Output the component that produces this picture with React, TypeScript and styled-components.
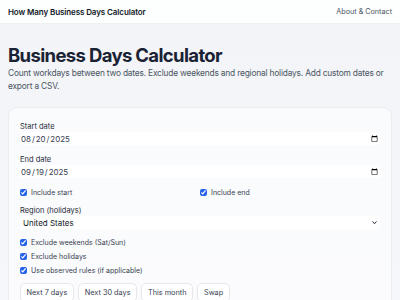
import React, { useState } from 'react';
import styled, { createGlobalStyle } from 'styled-components';

const GlobalStyle = createGlobalStyle`
  html, body {
    margin: 0;
    padding: 0;
  }
  body {
    font-family: Inter, "Noto Sans", sans-serif;
    background: linear-gradient(180deg, #f2f4f7 0%, #f5f7fa 100%);
    color: #111827;
    min-height: 100vh;
  }
  * {
    box-sizing: border-box;
  }
`;

const Header = styled.header`
  height: 24px;
  display: flex;
  align-items: center;
  justify-content: space-between;
  padding: 0 8px;
  background: rgba(255, 255, 255, 0.85);
  border-bottom: 1px solid #eef0f3;
`;

const Brand = styled.div`
  font-size: 8px;
  font-weight: 600;
  color: #111827;
  letter-spacing: -0.1px;
`;

const NavLink = styled.a`
  font-size: 7.2px;
  color: #4b5563;
  text-decoration: none;
`;

const Main = styled.main`
  padding: 20px 8px 0;
`;

const Title = styled.h1`
  margin: 0;
  font-size: 18.5px;
  line-height: 22px;
  font-weight: 700;
  color: #1a2233;
  letter-spacing: -0.65px;
`;

const Lead = styled.p`
  margin: 1px 0 0;
  font-size: 8.4px;
  line-height: 13px;
  color: #4b5563;
  letter-spacing: -0.2px;
`;

const Card = styled.section`
  margin-top: 14px;
  padding: 12px 11px;
  border: 1px solid #e9ecf0;
  border-radius: 9px;
  background: rgba(255, 255, 255, 0.55);
`;

const Field = styled.div<{ $gapAfter: number }>`
  display: flex;
  flex-direction: column;
  margin-bottom: ${(p) => p.$gapAfter}px;
`;

const Label = styled.label`
  padding-top: 2px;
  font-size: 7.5px;
  line-height: 10px;
  color: #1f2937;
`;

const DateInput = styled.input`
  height: 13px;
  border: none;
  background: #ffffff;
  font-family: inherit;
  font-size: 7.9px;
  color: #374151;
  padding: 0 2px 0 0;
  outline: none;
  &::-webkit-calendar-picker-indicator {
    width: 7px;
    height: 7px;
    padding: 0;
    margin: 0;
  }
`;

const SelectWrap = styled.div`
  position: relative;
  display: flex;
`;

const Select = styled.select`
  flex: 1;
  appearance: none;
  height: 13px;
  border: none;
  border-radius: 0;
  background: #ffffff;
  font-family: inherit;
  font-size: 8px;
  color: #111827;
  padding: 0 0 0 3px;
  outline: none;
`;

const Chevron = styled.svg`
  position: absolute;
  right: 3px;
  top: 4.5px;
  width: 5px;
  height: 4px;
  pointer-events: none;
`;

const Row = styled.div`
  display: grid;
  grid-template-columns: 1fr 1fr;
  margin-bottom: 6.5px;
`;

const Check = styled.label<{ $line?: number }>`
  display: flex;
  align-items: center;
  gap: 4px;
  font-size: 7px;
  line-height: ${(p) => p.$line ?? 10}px;
  color: #374151;
  input {
    margin: 0;
    width: 7px;
    height: 7px;
    accent-color: #2563eb;
  }
`;

const Checks = styled.div`
  display: flex;
  flex-direction: column;
  margin-top: 6.5px;
  margin-bottom: 5.5px;
`;

const Buttons = styled.div`
  display: flex;
  gap: 4.5px;
`;

const Chip = styled.button`
  font-family: inherit;
  font-size: 7.3px;
  color: #374151;
  background: #ffffff;
  border: 1px solid #e6e8ec;
  border-radius: 5px;
  padding: 0 5.5px;
  height: 19px;
`;

export default function App() {
  const [start, setStart] = useState('2025-08-20');
  const [end, setEnd] = useState('2025-09-19');

  return (
    <>
      <GlobalStyle />
      <Header>
        <Brand>How Many Business Days Calculator</Brand>
        <NavLink href="#">About &amp; Contact</NavLink>
      </Header>
      <Main>
        <Title>Business Days Calculator</Title>
        <Lead>
          Count workdays between two dates. Exclude weekends and regional holidays. Add custom dates or
          export a CSV.
        </Lead>
        <Card>
          <Field $gapAfter={8}>
            <Label>Start date</Label>
            <DateInput type="date" value={start} onChange={(e) => setStart(e.target.value)} />
          </Field>
          <Field $gapAfter={9.5}>
            <Label>End date</Label>
            <DateInput type="date" value={end} onChange={(e) => setEnd(e.target.value)} />
          </Field>
          <Row>
            <Check><input type="checkbox" defaultChecked />Include start</Check>
            <Check><input type="checkbox" defaultChecked />Include end</Check>
          </Row>
          <Field $gapAfter={0}>
            <Label>Region (holidays)</Label>
            <SelectWrap>
              <Select defaultValue="US">
                <option value="US">United States</option>
              </Select>
              <Chevron viewBox="0 0 10 8">
                <path d="M1.5 1.5 L5 5.5 L8.5 1.5" fill="none" stroke="#1f2937" strokeWidth="2" strokeLinecap="round" strokeLinejoin="round" />
              </Chevron>
            </SelectWrap>
          </Field>
          <Checks>
            <Check $line={14}><input type="checkbox" defaultChecked />Exclude weekends (Sat/Sun)</Check>
            <Check $line={14}><input type="checkbox" defaultChecked />Exclude holidays</Check>
            <Check $line={14}><input type="checkbox" defaultChecked />Use observed rules (if applicable)</Check>
          </Checks>
          <Buttons>
            <Chip>Next 7 days</Chip>
            <Chip>Next 30 days</Chip>
            <Chip>This month</Chip>
            <Chip>Swap</Chip>
          </Buttons>
        </Card>
      </Main>
    </>
  );
}
